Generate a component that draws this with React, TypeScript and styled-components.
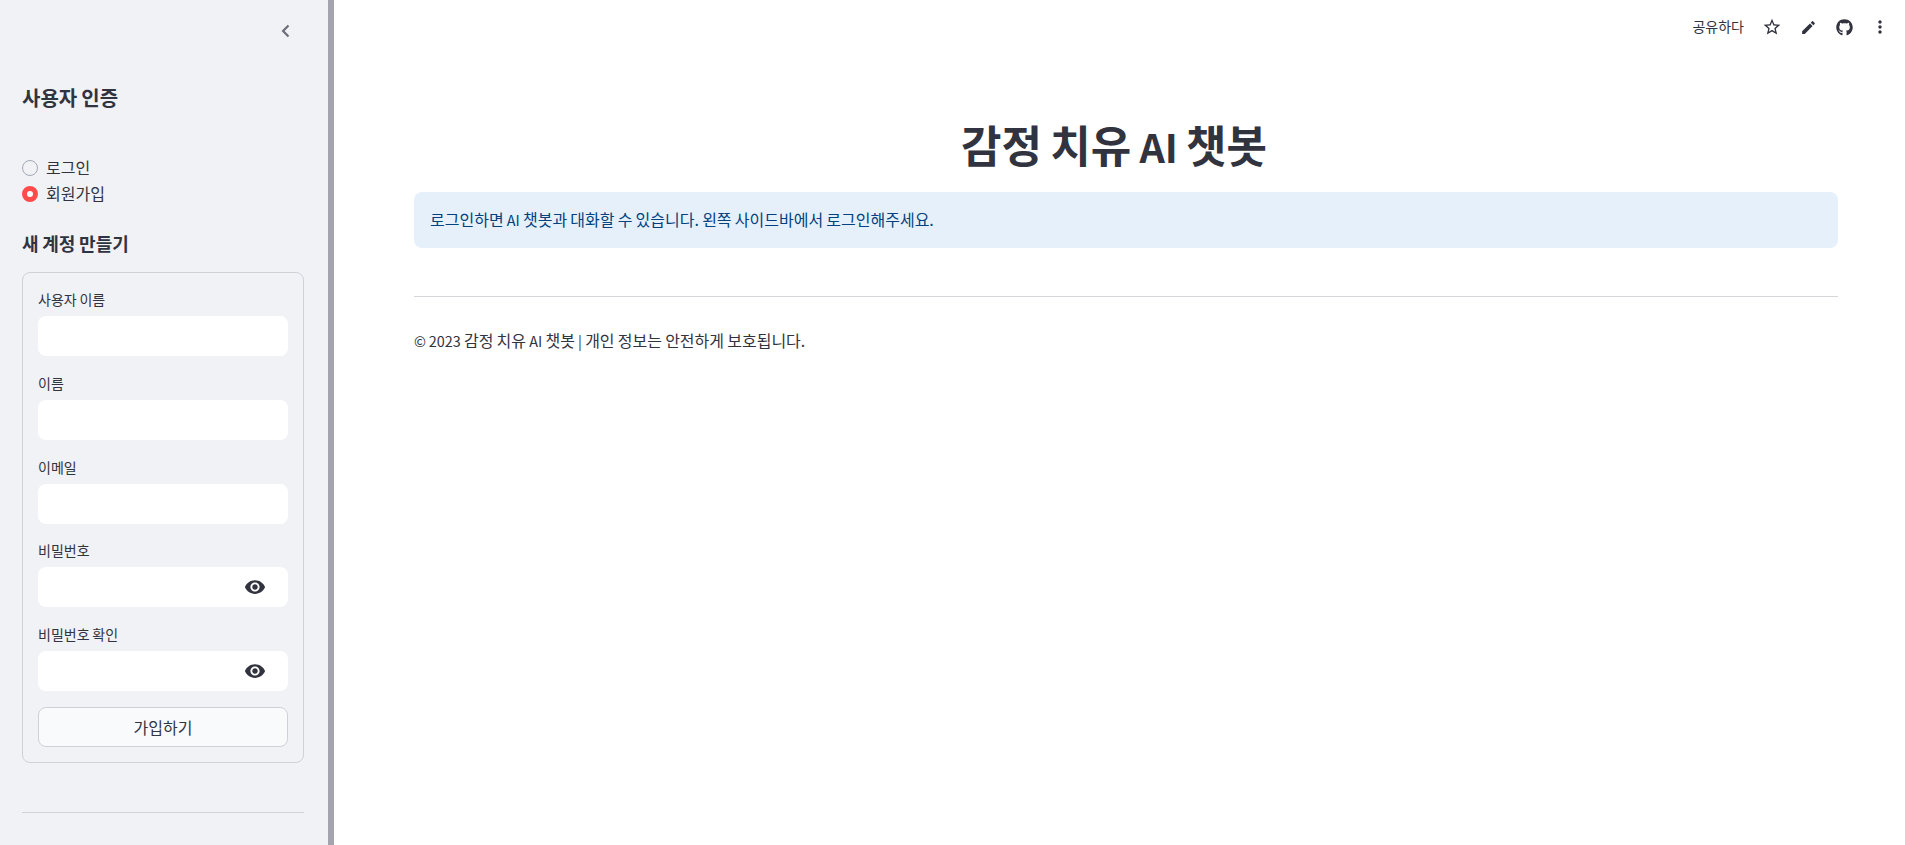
import { useState } from 'react';
import styled, { createGlobalStyle } from 'styled-components';
import { FaGithub } from 'react-icons/fa';

const GlobalStyle = createGlobalStyle`
  html, body {
    margin: 0;
    height: 100%;
    overflow: hidden;
    background: #ffffff;
    color: #31333f;
    font-family: "Noto Sans CJK KR", "Noto Sans", sans-serif;
    font-size: 16px;
    word-spacing: -0.024em;
  }
  * {
    box-sizing: border-box;
  }
`;

const Page = styled.div`
  display: flex;
  width: 100vw;
  height: 100vh;
`;

const Sidebar = styled.aside`
  flex: 0 0 334px;
  height: 100%;
  padding: 0 24px 0 22px;
  background: #f0f2f6;
  border-right: 6px solid #a3a4ad;
  overflow: hidden;
`;

const CollapseRow = styled.div`
  display: flex;
  justify-content: flex-end;
  height: 47px;
  padding-top: 20px;
  margin-right: 8px;
  color: #6b6d78;
`;

const SidebarTitle = styled.h2`
  margin: 35px 0 0;
  font-size: 20px;
  line-height: 32px;
  font-weight: 600;
`;

const RadioGroup = styled.div`
  display: flex;
  flex-direction: column;
  gap: 4px;
  margin-top: 42px;
`;

const RadioRow = styled.label`
  display: flex;
  align-items: center;
  gap: 8px;
  height: 22px;
  font-size: 16px;
  cursor: pointer;
`;

const RadioDot = styled.span<{ $on: boolean }>`
  width: 16px;
  height: 16px;
  margin-top: 2px;
  border-radius: 50%;
  background: ${(p) => (p.$on ? '#ffffff' : '#f0f2f6')};
  border: ${(p) => (p.$on ? '5px solid #ff4b4b' : '1px solid #a3a8b4')};
`;

const FormTitle = styled.h3`
  margin: 25px 0 0;
  font-size: 18px;
  line-height: 28px;
  font-weight: 600;
`;

const Form = styled.form`
  display: flex;
  flex-direction: column;
  height: 491px;
  margin-top: 15px;
  padding: 15px;
  border: 1px solid #cfd1d7;
  border-radius: 8px;
`;

const Field = styled.div`
  height: 84px;
`;

const FieldLabel = styled.label`
  display: block;
  height: 28px;
  font-size: 14px;
  line-height: 22px;
`;

const InputWrap = styled.div`
  display: flex;
  align-items: center;
  height: 40px;
  background: #ffffff;
  border-radius: 8px;
  color: #31333f;
`;

const TextInput = styled.input`
  flex: 1;
  min-width: 0;
  height: 100%;
  padding: 0 12px;
  border: none;
  outline: none;
  background: transparent;
  font: inherit;
`;

const EyeButton = styled.span`
  display: flex;
  justify-content: center;
  flex: 0 0 24px;
  margin-right: 21px;
`;

const SubmitButton = styled.button`
  height: 40px;
  background: #f9fafb;
  border: 1px solid #cfd1d7;
  border-radius: 8px;
  color: #31333f;
  font: inherit;
  font-size: 16px;
  cursor: pointer;
`;

const SidebarRule = styled.hr`
  margin: 49px 0 0;
  border: none;
  border-top: 1px solid #d0d2d8;
`;

const Main = styled.main`
  flex: 1;
  min-width: 0;
  display: flex;
  flex-direction: column;
`;

const Toolbar = styled.header`
  display: flex;
  align-items: center;
  justify-content: flex-end;
  height: 54px;
  padding-right: 7px;
  font-size: 14px;
  color: #31333f;
`;

const ShareLabel = styled.span`
  margin: 0 10px 2px 0;
`;

const ToolIcon = styled.span`
  display: flex;
  align-items: center;
  justify-content: center;
  width: 36px;
  color: #31333f;
`;

const Content = styled.div`
  padding: 66px 67px 0 80px;
`;

const Title = styled.h1`
  margin: 0;
  height: 72px;
  padding-right: 24px;
  text-align: center;
  font-size: 44px;
  line-height: 48px;
  font-weight: 700;
  word-spacing: -0.04em;
  color: #31333f;
`;

const InfoBox = styled.div`
  height: 56px;
  padding: 0 16px;
  border-radius: 8px;
  background: #e6f0fa;
  color: #004280;
  font-size: 16px;
  line-height: 54px;
`;

const ContentRule = styled.hr`
  margin: 48px 0 0;
  border: none;
  border-top: 1px solid #d5d6da;
`;

const Footer = styled.p`
  margin: 30px 0 0;
  font-size: 16px;
  line-height: 26px;
`;

// latin glyphs of the CJK font run wide next to the hangul
const Latin = styled.span`
  font-size: 0.9em;
`;

function Eye() {
  return (
    <svg width="22" height="22" viewBox="0 0 24 24" fill="currentColor">
      <path d="M12 4.5C7 4.5 2.73 7.61 1 12c1.73 4.39 6 7.5 11 7.5s9.27-3.11 11-7.5c-1.73-4.39-6-7.5-11-7.5zM12 17c-2.76 0-5-2.24-5-5s2.24-5 5-5 5 2.24 5 5-2.24 5-5 5zm0-8c-1.66 0-3 1.34-3 3s1.34 3 3 3 3-1.34 3-3-1.34-3-3-3z" />
    </svg>
  );
}

const fields = [
  { label: '사용자 이름', type: 'text' },
  { label: '이름', type: 'text' },
  { label: '이메일', type: 'text' },
  { label: '비밀번호', type: 'password' },
  { label: '비밀번호 확인', type: 'password' },
];

const modes = ['로그인', '회원가입'];

export default function App() {
  const [mode, setMode] = useState('회원가입');

  return (
    <Page>
      <GlobalStyle />
      <Sidebar>
        <CollapseRow>
          <svg width="20" height="22" viewBox="0 0 24 24" fill="none" stroke="currentColor" strokeWidth="2.6">
            <path d="M15 5.5 8.5 12l6.5 6.5" />
          </svg>
        </CollapseRow>
        <SidebarTitle>사용자 인증</SidebarTitle>
        <RadioGroup>
          {modes.map((m) => (
            <RadioRow key={m} onClick={() => setMode(m)}>
              <RadioDot $on={mode === m} />
              {m}
            </RadioRow>
          ))}
        </RadioGroup>
        <FormTitle>새 계정 만들기</FormTitle>
        <Form onSubmit={(e) => e.preventDefault()}>
          {fields.map((f) => (
            <Field key={f.label}>
              <FieldLabel>{f.label}</FieldLabel>
              <InputWrap>
                <TextInput type={f.type} />
                {f.type === 'password' && (
                  <EyeButton>
                    <Eye />
                  </EyeButton>
                )}
              </InputWrap>
            </Field>
          ))}
          <SubmitButton type="submit">가입하기</SubmitButton>
        </Form>
        <SidebarRule />
      </Sidebar>
      <Main>
        <Toolbar>
          <ShareLabel>공유하다</ShareLabel>
          <ToolIcon>
            <svg width="20" height="20" viewBox="0 0 24 24" fill="currentColor">
              <path d="M22 9.24l-7.19-.62L12 2 9.19 8.63 2 9.24l5.46 4.73L5.82 21 12 17.27 18.18 21l-1.63-7.03L22 9.24zM12 15.4l-3.76 2.27 1-4.28-3.32-2.88 4.38-.38L12 6.1l1.71 4.04 4.38.38-3.32 2.88 1 4.28L12 15.4z" />
            </svg>
          </ToolIcon>
          <ToolIcon>
            <svg width="17" height="17" viewBox="0 0 24 24" fill="currentColor">
              <path d="M3 17.25V21h3.75L17.81 9.94l-3.75-3.75L3 17.25zM20.71 7.04a1 1 0 0 0 0-1.41l-2.34-2.34a1 1 0 0 0-1.41 0l-1.83 1.83 3.75 3.75 1.83-1.83z" />
            </svg>
          </ToolIcon>
          <ToolIcon>
            <FaGithub size={17} />
          </ToolIcon>
          <ToolIcon>
            <svg width="20" height="20" viewBox="0 0 24 24" fill="currentColor">
              <path d="M12 8c1.1 0 2-.9 2-2s-.9-2-2-2-2 .9-2 2 .9 2 2 2zm0 2c-1.1 0-2 .9-2 2s.9 2 2 2 2-.9 2-2-.9-2-2-2zm0 6c-1.1 0-2 .9-2 2s.9 2 2 2 2-.9 2-2-.9-2-2-2z" />
            </svg>
          </ToolIcon>
        </Toolbar>
        <Content>
          <Title>
            감정 치유 <Latin>AI</Latin> 챗봇
          </Title>
          <InfoBox>
            로그인하면 <Latin>AI</Latin> 챗봇과 대화할 수 있습니다. 왼쪽 사이드바에서 로그인해주세요.
          </InfoBox>
          <ContentRule />
          <Footer>
            <Latin>© 2023</Latin> 감정 치유 <Latin>AI</Latin> 챗봇 <Latin>|</Latin> 개인 정보는 안전하게 보호됩니다.
          </Footer>
        </Content>
      </Main>
    </Page>
  );
}
